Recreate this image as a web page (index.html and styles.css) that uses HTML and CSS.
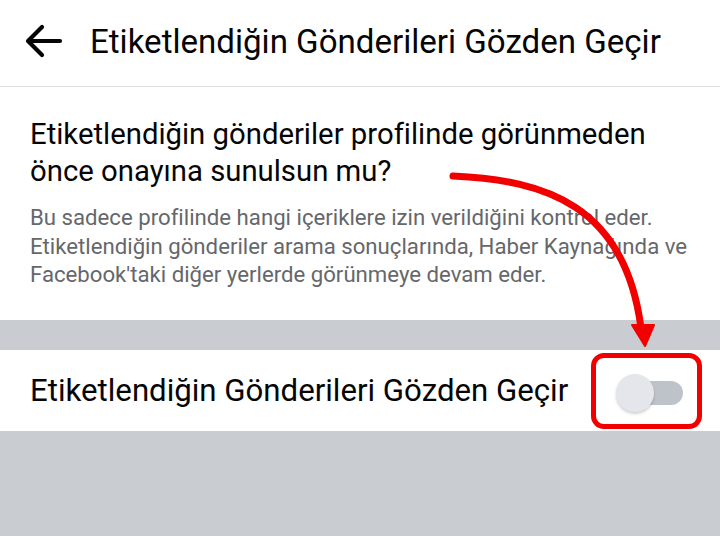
FILE: index.html
```html
<!DOCTYPE html>
<html lang="tr">
<head>
<meta charset="utf-8">
<title>Etiketlendiğin Gönderileri Gözden Geçir</title>
<link rel="stylesheet" href="styles.css">
</head>
<body>
<div class="screen">
  <header class="topbar">
    <svg class="back" width="38" height="34" viewBox="0 0 38 34" aria-hidden="true">
      <path d="M35 17 H4 M17 3 L3 17 L17 31" fill="none" stroke="#050505" stroke-width="4.2" stroke-linecap="round" stroke-linejoin="round"/>
    </svg>
    <h1 class="title">Etiketlendiğin Gönderileri Gözden Geçir</h1>
  </header>
  <section class="info">
    <p class="question">Etiketlendiğin gönderiler profilinde görünmeden<br>önce onayına sunulsun mu?</p>
    <p class="desc">Bu sadece profilinde hangi içeriklere izin verildiğini kontrol eder.<br>Etiketlendiğin gönderiler arama sonuçlarında, Haber Kaynağında ve<br>Facebook'taki diğer yerlerde görünmeye devam eder.</p>
  </section>
  <div class="gap"></div>
  <section class="row">
    <span class="row-label">Etiketlendiğin Gönderileri Gözden Geçir</span>
    <span class="toggle"><span class="track"></span><span class="thumb"></span></span>
    <span class="highlight"></span>
  </section>
  <svg class="annot" width="720" height="536" viewBox="0 0 720 536" aria-hidden="true">
    <path d="M453 176 C 545 180, 625 205, 641 328" fill="none" stroke="#f20000" stroke-width="7" stroke-linecap="round"/>
    <polygon points="632,325 654,325 645,346" fill="#f20000" stroke="#f20000" stroke-width="2" stroke-linejoin="round"/>
  </svg>
</div>
</body>
</html>
```
FILE: styles.css
```css
* { box-sizing: border-box; }
html, body { margin: 0; padding: 0; }
body {
  background: #c9ccd1;
  font-family: Roboto, "Noto Sans", sans-serif;
  color: #1c1e21;
}
.screen {
  position: relative;
  width: 720px;
  height: 536px;
  overflow: hidden;
  background: #c9ccd1;
}
.topbar {
  height: 87px;
  background: #fff;
  border-bottom: 1px solid #dadde1;
  display: flex;
  align-items: center;
  padding-left: 25px;
  padding-bottom: 4px;
}
.back { flex: none; }
.title {
  margin: 0 0 0 27px;
  font-size: 33.1px;
  font-weight: 400;
  color: #050505;
  white-space: nowrap;
}
.info {
  background: #fff;
  height: 233px;
  padding: 29px 10px 0 30px;
}
.question {
  margin: 0;
  font-size: 29.3px;
  line-height: 37px;
  color: #050505;
  white-space: nowrap;
}
.desc {
  margin: 13px 0 0 0;
  font-size: 22.2px;
  line-height: 28.5px;
  color: #65676b;
  white-space: nowrap;
}
.gap { height: 30px; }
.row {
  position: relative;
  height: 81px;
  background: #fff;
  display: flex;
  align-items: center;
  padding: 0 37px 0 30px;
}
.row-label {
  font-size: 31.2px;
  color: #050505;
  white-space: nowrap;
}
.toggle {
  position: relative;
  margin-left: auto;
  width: 67px;
  height: 38px;
  flex: none;
  margin-top: 4px;
}
.track {
  position: absolute;
  right: 0;
  top: 7px;
  width: 44px;
  height: 24px;
  border-radius: 12px;
  background: #bec3c9;
}
.thumb {
  position: absolute;
  left: 0;
  top: 0;
  width: 38px;
  height: 38px;
  border-radius: 50%;
  background: #e4e6eb;
  box-shadow: 0 2px 3px rgba(0,0,0,0.18);
}
.highlight {
  position: absolute;
  left: 591px;
  top: 3px;
  width: 111px;
  height: 76px;
  border: 5px solid #f20000;
  border-radius: 13px;
}
.annot {
  position: absolute;
  left: 0;
  top: 0;
  pointer-events: none;
}
```
